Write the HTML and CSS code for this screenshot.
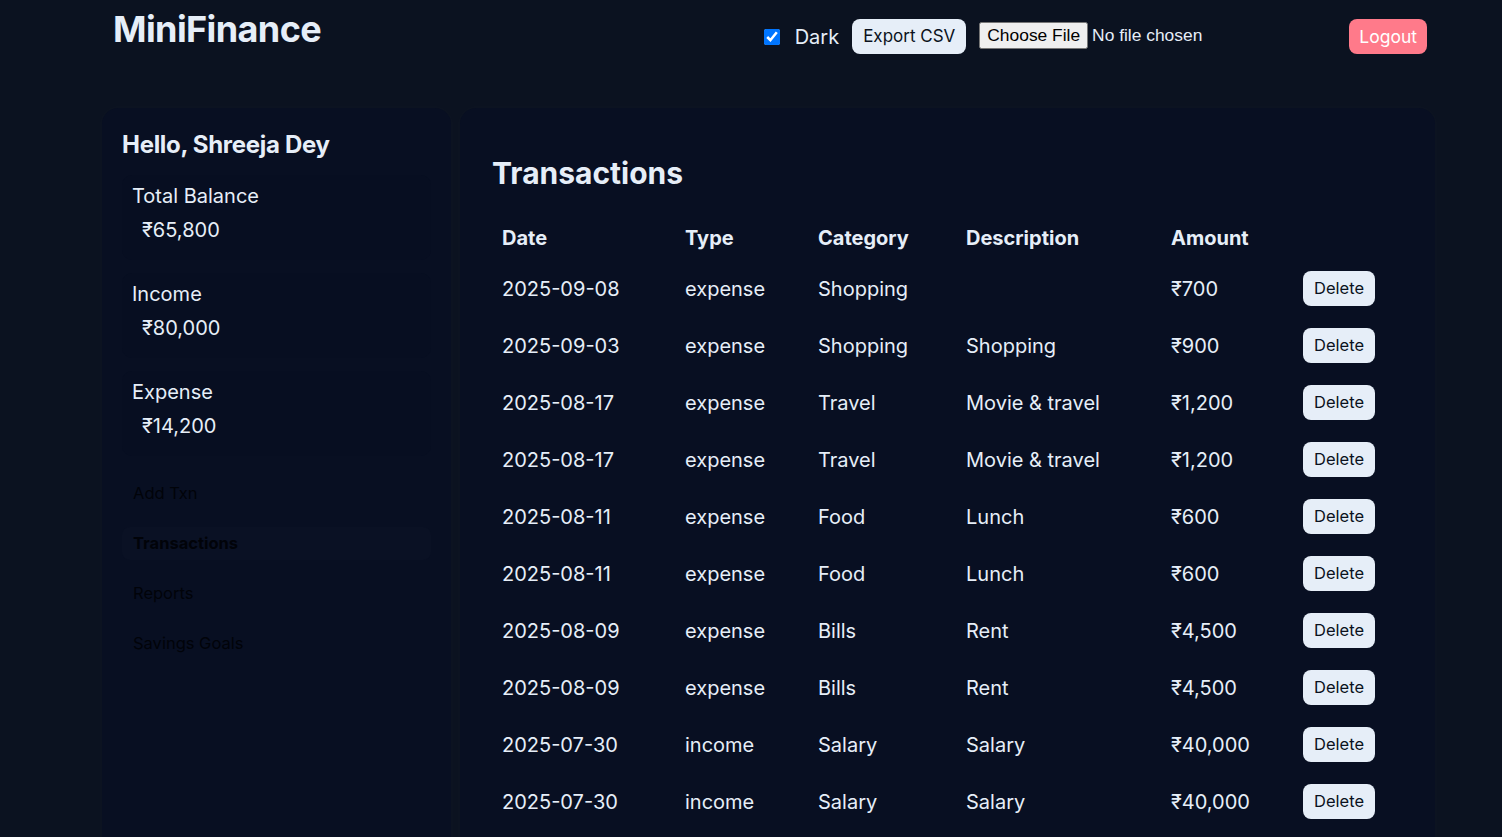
FILE: index.html
```html
<!DOCTYPE html>
<html lang="en">
<head>
<meta charset="utf-8">
<title>MiniFinance</title>
<link rel="stylesheet" href="styles.css">
</head>
<body>
<header class="topbar">
  <h1 class="brand">MiniFinance</h1>
  <div class="controls">
    <label class="dark-toggle"><input type="checkbox" checked> <span>Dark</span></label>
    <button class="btn">Export CSV</button>
    <input class="file" type="file">
  </div>
  <button class="btn btn-logout">Logout</button>
</header>

<div class="layout">
  <aside class="card sidebar">
    <h2 class="hello">Hello, Shreeja Dey</h2>
    <div class="stat">
      <div class="stat-label">Total Balance</div>
      <div class="stat-value">₹65,800</div>
    </div>
    <div class="stat">
      <div class="stat-label">Income</div>
      <div class="stat-value">₹80,000</div>
    </div>
    <div class="stat">
      <div class="stat-label">Expense</div>
      <div class="stat-value">₹14,200</div>
    </div>
    <nav class="nav">
      <div class="nav-item">Add Txn</div>
      <div class="nav-item active">Transactions</div>
      <div class="nav-item">Reports</div>
      <div class="nav-item">Savings Goals</div>
    </nav>
  </aside>

  <main class="card main">
    <h2 class="title">Transactions</h2>
    <table class="txns">
      <colgroup>
        <col class="c-date"><col class="c-type"><col class="c-cat"><col class="c-desc"><col class="c-amt"><col class="c-act">
      </colgroup>
      <thead>
        <tr><th>Date</th><th>Type</th><th>Category</th><th>Description</th><th>Amount</th><th></th></tr>
      </thead>
      <tbody>
        <tr><td>2025-09-08</td><td>expense</td><td>Shopping</td><td></td><td>₹700</td><td><button class="btn btn-del">Delete</button></td></tr>
        <tr><td>2025-09-03</td><td>expense</td><td>Shopping</td><td>Shopping</td><td>₹900</td><td><button class="btn btn-del">Delete</button></td></tr>
        <tr><td>2025-08-17</td><td>expense</td><td>Travel</td><td>Movie &amp; travel</td><td>₹1,200</td><td><button class="btn btn-del">Delete</button></td></tr>
        <tr><td>2025-08-17</td><td>expense</td><td>Travel</td><td>Movie &amp; travel</td><td>₹1,200</td><td><button class="btn btn-del">Delete</button></td></tr>
        <tr><td>2025-08-11</td><td>expense</td><td>Food</td><td>Lunch</td><td>₹600</td><td><button class="btn btn-del">Delete</button></td></tr>
        <tr><td>2025-08-11</td><td>expense</td><td>Food</td><td>Lunch</td><td>₹600</td><td><button class="btn btn-del">Delete</button></td></tr>
        <tr><td>2025-08-09</td><td>expense</td><td>Bills</td><td>Rent</td><td>₹4,500</td><td><button class="btn btn-del">Delete</button></td></tr>
        <tr><td>2025-08-09</td><td>expense</td><td>Bills</td><td>Rent</td><td>₹4,500</td><td><button class="btn btn-del">Delete</button></td></tr>
        <tr><td>2025-07-30</td><td>income</td><td>Salary</td><td>Salary</td><td>₹40,000</td><td><button class="btn btn-del">Delete</button></td></tr>
        <tr><td>2025-07-30</td><td>income</td><td>Salary</td><td>Salary</td><td>₹40,000</td><td><button class="btn btn-del">Delete</button></td></tr>
      </tbody>
    </table>
  </main>
</div>
</body>
</html>
```

FILE: styles.css
```css
* { box-sizing: border-box; }

html, body {
  margin: 0;
  background: #0b1220;
  color: #e6eef8;
  font-family: Inter, "Noto Sans", sans-serif;
}

body {
  overflow: hidden;
  height: 837px;
}

.topbar {
  display: flex;
  align-items: flex-start;
  padding: 7px 75px 0 113px;
  height: 108px;
}

.brand {
  margin: 0;
  font-size: 36px;
  line-height: 44px;
  font-weight: 700;
  letter-spacing: -0.6px;
}

.controls {
  margin-left: auto;
  margin-top: 12px;
  display: flex;
  align-items: center;
  height: 35px;
}

.dark-toggle {
  display: flex;
  align-items: center;
  font-size: 20px;
  margin-right: 13px;
}

.dark-toggle input {
  width: 16px;
  height: 16px;
  margin: 0 15px 0 0;
  accent-color: #0075ff;
}

.btn {
  font-family: Inter, "Noto Sans", sans-serif;
  font-size: 17px;
  line-height: 23px;
  padding: 6px 11px;
  border: 0;
  border-radius: 8px;
  background: #e6eef8;
  color: #0b1220;
}

.file {
  width: 226px;
  margin-left: 13px;
  margin-top: -2px;
  font-family: "Liberation Sans", Arial, sans-serif;
  font-size: 17.4px;
  color: #e6eef8;
}

.btn-logout {
  margin-left: 144px;
  margin-top: 12px;
  background: #ff7a8a;
  color: #ffffff;
  font-size: 17.5px;
  padding: 6px 10px;
}

.layout {
  display: grid;
  grid-template-columns: 349px 975px;
  gap: 9px;
  padding-left: 102px;
}

.card {
  background: #080f22;
  border-radius: 16px;
  box-shadow: 0 0 10px rgba(255, 255, 255, 0.025);
  min-height: 760px;
}

.sidebar {
  padding: 22px 20px 20px;
}

.hello {
  margin: 0 0 15px;
  font-size: 24px;
  line-height: 30px;
  font-weight: 700;
  letter-spacing: -0.3px;
}

.stat {
  background: #070e21;
  border-radius: 10px;
  padding: 9px 11px 18px;
  margin-bottom: 13px;
  font-size: 20px;
  line-height: 24px;
}

.stat-label { margin-left: -1px; }

.stat-value {
  margin-top: 10px;
  padding-left: 9px;
}

.nav {
  margin-top: 21px;
  display: flex;
  flex-direction: column;
  gap: 17px;
}

.nav-item {
  color: #010309;
  font-size: 16.5px;
  line-height: 21px;
  padding: 6px 11px;
  border-radius: 8px;
}

.nav-item.active {
  font-weight: 700;
  background: #0a1124;
}

.main {
  padding: 24px 32px;
}

.title {
  margin: 23px 0 24px;
  font-size: 30px;
  line-height: 36px;
  font-weight: 700;
}

.txns {
  width: 911px;
  border-collapse: collapse;
  table-layout: fixed;
  font-size: 20px;
  line-height: 24px;
}

.c-date { width: 183px; }
.c-type { width: 133px; }
.c-cat { width: 148px; }
.c-desc { width: 205px; }
.c-amt { width: 132px; }
.c-act { width: 110px; }

.txns th {
  text-align: left;
  font-weight: 700;
  padding: 11px 10px 10px;
}

.txns td {
  padding: 11px 10px;
  height: 57px;
  vertical-align: middle;
}

.btn-del {
  font-size: 16.5px;
  padding: 6px 11px;
}
```
